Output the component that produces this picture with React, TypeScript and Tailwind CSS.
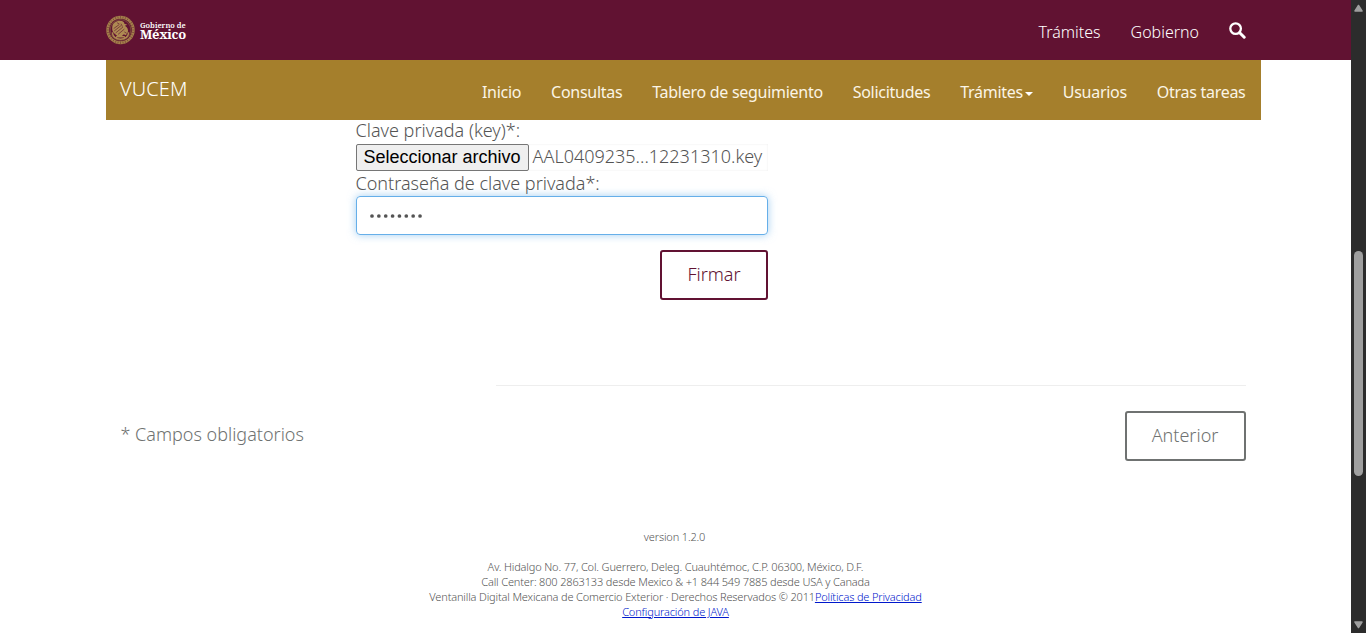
import type { ReactNode } from 'react';

const rays = Array.from({ length: 32 }, (_, i) => i * 11.25);

function Seal() {
  return (
    <svg className="h-[30px] w-[29px] shrink-0" viewBox="0 0 60 60" fill="none" aria-hidden="true">
      <circle cx="30" cy="30" r="26.5" stroke="#a5804b" strokeWidth="6" />
      {rays.map((angle) => (
        <path key={angle} d="M30 1v5" stroke="#7c4a3a" strokeWidth="1.6" transform={`rotate(${angle} 30 30)`} />
      ))}
      <circle cx="30" cy="30" r="21.5" stroke="#7a4a3a" strokeWidth="2" />
      <path d="M13 24c0-8 8-13 16-13 6 0 9 3 9 6l6 2-5 2c5 3 8 8 6 14l-4 6-4-2-6 5-7-1-6-5c-4-3-6-8-5-14z" fill="#ae8a52" />
      <path d="M16 27l11-8M17 32l14-11M20 36l15-12M25 39l13-11M31 17l3 6M38 34l5 3M23 15l5 3" stroke="#682034" strokeWidth="1.5" />
      <path d="M13 35c1 9 8 14 17 14s16-5 17-14M21 44l18 0" stroke="#ae8a52" strokeWidth="3" />
    </svg>
  );
}

function NavItem({ children }: { children: ReactNode }) {
  return <a className="flex items-center whitespace-nowrap">{children}</a>;
}

function Scrollbar() {
  return (
    <div className="flex h-full w-[15px] shrink-0 flex-col items-center bg-[#2c2c2c]">
      <svg className="mt-[4px] h-[8px] w-[9px]" viewBox="0 0 9 8" aria-hidden="true">
        <path d="M4.5 1.5 8 7H1z" fill="#9f9f9f" stroke="#9f9f9f" strokeWidth="1.5" strokeLinejoin="round" />
      </svg>
      <div className="mt-[239px] h-[225px] w-[9px] rounded-full bg-[#9f9f9f]" />
      <svg className="mt-auto mb-[4px] h-[8px] w-[9px]" viewBox="0 0 9 8" aria-hidden="true">
        <path d="M4.5 6.5 1 1h7z" fill="#9f9f9f" stroke="#9f9f9f" strokeWidth="1.5" strokeLinejoin="round" />
      </svg>
    </div>
  );
}

export default function App() {
  return (
    <div className="flex h-[633px] w-[1366px] overflow-hidden bg-white font-['Noto_Sans',sans-serif] text-[18px] leading-[26px] font-light text-[#545454]">
      <div className="flex h-full w-[1351px] flex-col">
        <header className="h-[60px] shrink-0 bg-[#611232] text-white">
          <div className="mr-[105px] ml-[106px] flex h-[60px] items-center">
            <Seal />
            <div className="ml-[5px] flex flex-col font-['Noto_Serif','Liberation_Serif',serif]">
              <span className="text-[7.5px] leading-[8px] font-semibold">Gobierno de</span>
              <span className="-mb-[1px] text-[13px] leading-[11px] font-bold tracking-[-0.3px]">México</span>
            </div>
            <nav className="ml-auto flex items-center gap-[30px] pt-[4px] text-[16px] font-light">
              <NavItem>Trámites</NavItem>
              <NavItem>Gobierno</NavItem>
              <svg className="-mt-[4px] h-[17px] w-[17px]" viewBox="0 0 17 17" fill="none" stroke="white" aria-hidden="true">
                <circle cx="6.6" cy="6.6" r="5.3" strokeWidth="2.3" />
                <path d="m10.7 10.7 4.5 4.5" strokeWidth="3" strokeLinecap="round" />
              </svg>
            </nav>
          </div>
        </header>

        <div className="ml-[106px] flex h-[60px] w-[1155px] shrink-0 items-center bg-[#a57f2c] pr-[15.5px] pl-[14px] text-white">
          <span className="mb-[3px] text-[20px] tracking-[0.1px]">VUCEM</span>
          <nav className="ml-auto flex gap-[29.9px] pt-[4px] text-[16px] font-normal tracking-[-0.28px] text-[#fbf5e6]">
            <NavItem>Inicio</NavItem>
            <NavItem>Consultas</NavItem>
            <NavItem>Tablero de seguimiento</NavItem>
            <NavItem>Solicitudes</NavItem>
            <NavItem>
              Trámites
              <svg className="mt-[3px] ml-[2px] h-[4px] w-[8px]" viewBox="0 0 8 4" aria-hidden="true">
                <path d="M0 0h8L4 4z" fill="white" />
              </svg>
            </NavItem>
            <NavItem>Usuarios</NavItem>
            <NavItem>Otras tareas</NavItem>
          </nav>
        </div>

        <main className="ml-[106px] flex w-[1155px] flex-col">
          <form className="ml-[250px] flex w-[412px] flex-col">
            <label className="-ml-[0.5px] h-[24px] leading-[20px]">Clave privada (key)*:</label>
            <div className="flex h-[27px] items-center shadow-[inset_0_0_2px_#e8e8e8]">
              <button type="button" className="h-[27px] w-[173px] shrink-0 rounded-[2px] border border-[#767676] bg-[#efefef] pr-[1px] pb-[2px] font-['Liberation_Sans',sans-serif] text-[18px] leading-[22px] font-normal whitespace-nowrap text-black">
                Seleccionar archivo
              </button>
              <span className="mb-[3px] ml-[3.5px] whitespace-nowrap">AAL0409235...12231310.key</span>
            </div>
            <label className="-ml-[0.5px] h-[25px] leading-[24px]">Contraseña de clave privada*:</label>
            <div className="flex h-[39px] items-center rounded-[4px] border border-[#66afe9] pl-[13px] shadow-[0_0_8px_rgba(102,175,233,0.6)]">
              <svg className="mt-[1px] h-[4px] w-[53px]" viewBox="0 0 53 4" fill="#545454" aria-hidden="true">
                {Array.from({ length: 8 }, (_, i) => (
                  <circle key={i} cx={2 + i * 6.86} cy="2" r="1.85" />
                ))}
              </svg>
            </div>
            <button type="button" className="mt-[15px] h-[50px] w-[108px] self-end rounded-[3px] border-2 border-[#611232] pb-[2px] text-[#611232]">
              Firmar
            </button>
          </form>
          <hr className="mt-[85px] ml-[390px] w-[750px] border-[#eeeeee]" />
          <div className="mt-[25px] flex h-[50px] items-center justify-between pr-[15px] pl-[14.5px] text-[#6f7271]">
            <span className="mb-[4px]">* Campos obligatorios</span>
            <button type="button" className="h-[50px] w-[121px] rounded-[3px] border-2 border-[#6f7271] pr-[1px] pb-[2px]">Anterior</button>
          </div>
        </main>

        <footer className="mt-[68px] flex flex-col items-center text-[11px] leading-[15px] tracking-[-0.155px] text-[#545454]">
          <p className="mr-[2px] mb-[15px]">version 1.2.0</p>
          <p>Av. Hidalgo No. 77, Col. Guerrero, Deleg. Cuauhtémoc, C.P. 06300, México, D.F.</p>
          <p>Call Center: 800 2863133 desde Mexico &amp; +1 844 549 7885 desde USA y Canada</p>
          <p>
            Ventanilla Digital Mexicana de Comercio Exterior · Derechos Reservados © 2011
            <a className="text-[#0018cc] underline">Políticas de Privacidad</a>
          </p>
          <a className="text-[#0018cc] underline">Configuración de JAVA</a>
        </footer>
      </div>
      <Scrollbar />
    </div>
  );
}
